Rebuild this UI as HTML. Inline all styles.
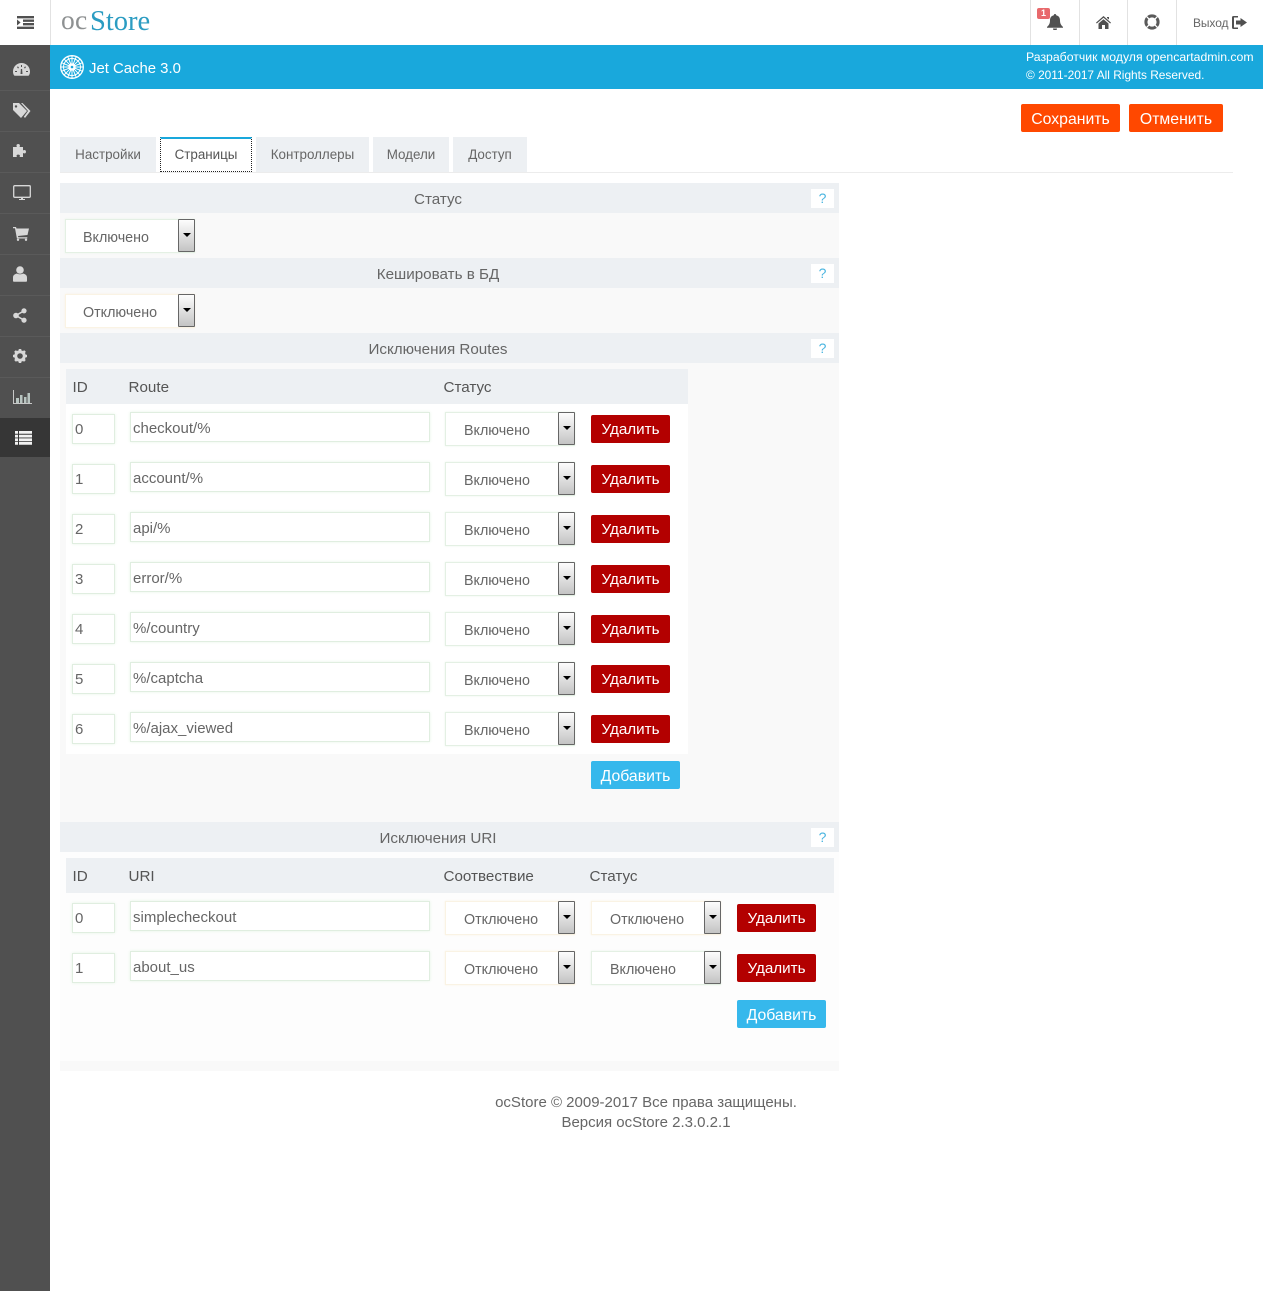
<!DOCTYPE html>
<html lang="ru"><head><meta charset="utf-8"><title>Jet Cache</title>
<style>
html,body{margin:0;padding:0;background:#fff}
body{position:relative;width:1263px;height:1306px;overflow:hidden;font-family:"Liberation Sans",Arial,sans-serif;color:#666;font-size:14px}
div,svg{position:absolute;box-sizing:border-box}
.t{white-space:nowrap}
.sep{top:0;width:1px;height:45px;background:#e2e2e2}
.sl{left:0;width:50px;height:1px;background:#5a5a5a}
.tab{top:137px;height:35px;background:#edf0f3;text-align:center;line-height:35px;font-size:13.4px;color:#666}
.h{left:60px;width:779px;height:30px;background:#edf0f3;text-align:center;line-height:33px;font-size:15.2px;padding-right:23px}
.q{left:811px;width:23px;height:19px;background:#fff;color:#4ab5e0;text-align:center;line-height:19px;font-size:14px}
.th{background:#edf0f3;height:35px}
.thc{line-height:37px;font-size:15.2px;color:#555;margin-left:-.5px}
.i{background:#fff;border:1px solid #e0eee0;box-shadow:0 0 3px #e6f4e6;font-size:15px;line-height:29px;padding-left:2px;color:#666}
.id{line-height:29px}
.u{line-height:31px}
.s{width:130px;height:34px;background:#fff;border:1px solid #e4f0e4;box-shadow:0 0 2px #e8f4e8;font-size:14.3px;line-height:36px;padding-left:18px;color:#666}
.off{border-color:#faf3e4;box-shadow:0 0 2px #fbf3e4}
.a{width:17px;height:33px;border:1px solid #666;background:linear-gradient(#fdfdfd,#c4c4c4);border-radius:1px}
.a:after{content:"";position:absolute;left:4px;top:13px;border:4px solid transparent;border-top:4px solid #000;border-bottom:0}
.r{width:79px;height:28px;background:#b30000;color:#fff;border-radius:2px;text-align:center;line-height:30px;font-size:15.2px}
.g{width:89px;height:28px;background:#36b8ec;color:#fff;border-radius:2px;text-align:center;line-height:31px;font-size:15.8px}
.o{top:104px;height:28px;background:#ff4800;color:#fff;border-radius:2px;text-align:center;line-height:32px;font-size:15.8px}
</style></head><body>

<!-- sidebar -->
<div style="left:0;top:45px;width:50px;height:1246px;background:#505050"></div>
<div class="sl" style="top:90px"></div><div class="sl" style="top:131px"></div><div class="sl" style="top:172px"></div><div class="sl" style="top:213px"></div><div class="sl" style="top:254px"></div><div class="sl" style="top:295px"></div><div class="sl" style="top:336px"></div><div class="sl" style="top:377px"></div>
<div style="left:0;top:418px;width:50px;height:39px;background:#363636"></div>

<svg style="left:13px;top:62px" width="17" height="15" viewBox="0 0 17 15"><path fill="#d8d8d8" fill-rule="evenodd" d="M8.5 1C4 1 0 4.500 0 9.500c0 1.500.4 2.800 1 3.800.2.300.5.500.9.500h13.200c.4 0 .7-.2.900-.5.600-1 1-2.300 1-3.800C17 4.500 13 1 8.500 1zM8 3h1v2H8zM4 5l1-.6 1 1.500-1 .6zM2 9h2v1H2zm11 0h2v1h-2zm-1-4.600 1 .6-1 1.500-1-.6zM7.500 12l.4-5h1.200l.4 5z"/></svg>
<svg style="left:13px;top:103px" width="18" height="16" viewBox="0 0 18 16"><path fill="#d8d8d8" d="M0 0h6l8 8-6 7-8-8zM3 2.200a1.200 1.200 0 1 0 .01 0z M8 0h1.500l8 8-5.500 7-1.200-1.200L15 8z"/></svg>
<svg style="left:13px;top:142px" width="16" height="16" viewBox="0 0 16 16"><path fill="#d8d8d8" d="M0 5h4c-.8-1-.8-3 1.200-3S7.200 4 6.500 5H10v3.500c1-.9 3-.8 3 1.200s-2 2-3 1.300V15H6.500c.7-1 .7-2.400-1.300-2.400S3.300 14 4 15H0z"/></svg>
<svg style="left:13px;top:185px" width="18" height="15" viewBox="0 0 18 15"><path fill="none" stroke="#d8d8d8" stroke-width="1.300" d="M1.700.7h14.600a1 1 0 0 1 1 1v9.600a1 1 0 0 1-1 1H1.700a1 1 0 0 1-1-1V1.700a1 1 0 0 1 1-1z"/><path fill="#d8d8d8" d="M8 12.500h2V14h2v1H6v-1h2z"/></svg>
<svg style="left:13px;top:227px" width="16" height="14" viewBox="0 0 16 14"><path fill="#d8d8d8" d="M0 0h3l.5 1.500H16l-1.500 6.500-9.500 1 .3 1.200h9v1.300H3.900L2 1.300H0z"/><circle fill="#d8d8d8" cx="5" cy="12.800" r="1.200"/><circle fill="#d8d8d8" cx="13" cy="12.800" r="1.200"/></svg>
<svg style="left:13px;top:266px" width="14" height="16" viewBox="0 0 14 16"><circle fill="#d8d8d8" cx="7" cy="4" r="3.800"/><path fill="#d8d8d8" d="M0 15v-3.500C0 9 2 8 4 7.500c1.800 1 4.200 1 6 0 2 .5 4 1.500 4 4V15a1 1 0 0 1-1 .8H1A1 1 0 0 1 0 15z"/></svg>
<svg style="left:13px;top:308px" width="14" height="15" viewBox="0 0 14 15"><path stroke="#d8d8d8" stroke-width="1.500" fill="none" d="M11 2.800 3 7.500l8 4.700"/><circle fill="#d8d8d8" cx="3" cy="7.500" r="2.800"/><circle fill="#d8d8d8" cx="11" cy="2.800" r="2.600"/><circle fill="#d8d8d8" cx="11" cy="12.200" r="2.600"/></svg>
<svg style="left:13px;top:349px" width="14" height="14" viewBox="0 0 14 14"><circle cx="7" cy="7" r="4.300" fill="none" stroke="#d8d8d8" stroke-width="3"/><path stroke="#d8d8d8" stroke-width="2.600" d="M7 0v14M0 7h14M2 2l10 10M12 2 2 12" stroke-dasharray="2.500 9 2.500"/></svg>
<svg style="left:13px;top:390px" width="19" height="15" viewBox="0 0 19 15"><path fill="#c8c8c8" d="M0 0h1v13h18v1H0z"/><path fill="#b8c4c0" d="M3 8h3v5H3zm4-3h2.500v8H7zm4 2h2.500v6H11zm3.500-4H17v10h-2.500z"/></svg>
<svg style="left:15px;top:431px" width="17" height="14" viewBox="0 0 17 14"><path fill="#f2f2f2" d="M0 0h3v2.800H0zm4 0h13v2.800H4zM0 3.700h3v2.800H0zm4 0h13v2.800H4zM0 7.400h3v2.800H0zm4 0h13v2.800H4zM0 11h3v2.800H0zm4 0h13v2.800H4z"/></svg>

<!-- header -->
<div style="left:50px;top:0;width:1px;height:45px;background:#e2e2e2"></div>
<svg style="left:17px;top:16px" width="17" height="13" viewBox="0 0 17 13"><path fill="#505050" d="M0 0h17v2.400H0zM6 3.500h11v2.400H6zM6 7h11v2.400H6zM0 10.600h17V13H0zM0 3.500l3.600 3-3.600 3z"/></svg>
<div class="t" style="left:61px;top:2px;font-family:'Liberation Serif',serif;font-size:27.500px;line-height:36px;color:#8e9192;letter-spacing:.2px">oc</div>
<div class="t" style="left:90px;top:3px;font-family:'Liberation Serif',serif;font-size:28.500px;line-height:38px;color:#2b9cc2">Store</div>
<div class="sep" style="left:1030px"></div><div class="sep" style="left:1079px"></div><div class="sep" style="left:1127px"></div><div class="sep" style="left:1176px"></div>
<svg style="left:1047px;top:14px" width="16" height="16" viewBox="0 0 16 16"><path fill="#505050" d="M8 0a1.200 1.200 0 0 1 1.200 1.300C12 2 13 4 13 6.500c0 3 1 4.500 3 6.500v.8H0V13c2-2 3-3.500 3-6.500C3 4 4 2 6.800 1.300A1.200 1.200 0 0 1 8 0zM6 14.500h4a2 2 0 0 1-4 0z"/></svg>
<div class="t" style="left:1037px;top:8px;width:13px;height:11px;background:#e8696c;border-radius:2px;color:#fff;font-size:9px;font-weight:bold;line-height:11px;text-align:center">1</div>
<svg style="left:1096px;top:16px" width="15" height="13" viewBox="0 0 15 13"><path fill="#505050" d="M7.500 0 15 6.600l-.8.900-6.700-5.800L.8 7.500 0 6.600zM11 1h2v2.500L11 2zM2.500 7.500l5-4.300 5 4.300V13h-3.500V9H6v4H2.500z"/></svg>
<svg style="left:1144px;top:14px" width="16" height="16" viewBox="0 0 16 16"><circle cx="8" cy="8" r="6.100" fill="none" stroke="#5a5a5a" stroke-width="3"/><path stroke="#fff" stroke-width="1.300" d="M2.600 2.600l2.800 2.800M13.400 2.600l-2.800 2.800M2.600 13.400l2.800-2.800M13.400 13.400l-2.800-2.800"/></svg>
<div class="t" style="left:1193px;top:14px;font-size:12px;line-height:18px;color:#666;letter-spacing:-.1px">Выход</div>
<svg style="left:1232px;top:16px" width="15" height="13" viewBox="0 0 15 13"><path fill="#505050" d="M1.500 0H6v1.500H2v10h4V13H1.500A1.500 1.500 0 0 1 0 11.500v-10A1.500 1.500 0 0 1 1.500 0zM8.500 2 15 6.500 8.500 11V8.500H4v-4h4.500z"/></svg>

<!-- blue bar -->
<div style="left:50px;top:45px;width:1213px;height:44px;background:#19a8dc"></div>
<svg style="left:60px;top:55px" width="24" height="24" viewBox="0 0 24 24" fill="none" stroke="#fff"><circle cx="12" cy="12" r="11.300" stroke-width="1.300"/><circle cx="12" cy="12" r="8.500" stroke-width="1"/><circle cx="12" cy="12" r="3" stroke-width="1.500"/><path stroke-width="1" d="M12 1v22M1 12h22M4.200 4.200l15.600 15.600M19.800 4.200 4.200 19.800M7.800 1.800l8.400 20.400M16.200 1.800 7.800 22.200M1.800 7.800l20.400 8.400M22.200 7.800 1.800 16.200"/><circle cx="12" cy="12" r="1.300" fill="#19a8dc" stroke="none"/></svg>
<div class="t" style="left:89px;top:59px;font-size:14.9px;line-height:20px;color:#fff">Jet Cache 3.0</div>
<div class="t" style="left:1026px;top:49px;font-size:12.250px;line-height:16px;color:#fff">Разработчик модуля opencartadmin.com</div>
<div class="t" style="left:1026px;top:67px;font-size:11.900px;line-height:16px;color:#fff">© 2011-2017 All Rights Reserved.</div>

<!-- action buttons -->
<div class="o" style="left:1021px;width:99px">Сохранить</div>
<div class="o" style="left:1129px;width:94px">Отменить</div>

<!-- tabs -->
<div style="left:60px;top:172px;width:1173px;height:1px;background:#ececec"></div>
<div class="tab" style="left:60px;width:96px">Настройки</div>
<div class="tab" style="left:160px;width:92px;background:#fff;border:1px dotted #222;border-top:2px solid #19a8dc;line-height:32px;color:#555">Страницы</div>
<div class="tab" style="left:256px;width:113px">Контроллеры</div>
<div class="tab" style="left:373px;width:76px">Модели</div>
<div class="tab" style="left:453px;width:74px">Доступ</div>

<!-- panel backgrounds -->
<div style="left:60px;top:183px;width:779px;height:639px;background:#f9f9f9"></div>
<div style="left:60px;top:852px;width:779px;height:209px;background:#fdfdfd"></div>
<div style="left:60px;top:1061px;width:779px;height:10px;background:#f9f9f9"></div>

<!-- Статус -->
<div class="h" style="top:183px">Статус</div><div class="q" style="top:189px">?</div>
<div class="s" style="left:65px;top:219px;padding-left:17px">Включено</div><div class="a" style="left:178px;top:219px"></div>

<!-- БД -->
<div class="h" style="top:258px">Кешировать в БД</div><div class="q" style="top:264px">?</div>
<div class="s off" style="left:65px;top:294px;padding-left:17px">Отключено</div><div class="a" style="left:178px;top:294px"></div>

<!-- Routes -->
<div class="h" style="top:333px">Исключения Routes</div><div class="q" style="top:339px">?</div>
<div style="left:66px;top:404px;width:622px;height:350px;background:#fff"></div>
<div class="th" style="left:66px;top:369px;width:622px"></div>
<div class="t thc" style="left:73px;top:369px">ID</div>
<div class="t thc" style="left:129px;top:369px">Route</div>
<div class="t thc" style="left:444px;top:369px">Статус</div>

<div class="i t id" style="left:72px;top:414px;width:43px;height:30px">0</div>
<div class="i t u" style="left:130px;top:412px;width:300px;height:30px">checkout/%</div>
<div class="s" style="left:445px;top:412px">Включено</div><div class="a" style="left:558px;top:412px"></div>
<div class="r" style="left:591px;top:415px">Удалить</div>

<div class="i t id" style="left:72px;top:464px;width:43px;height:30px">1</div>
<div class="i t u" style="left:130px;top:462px;width:300px;height:30px">account/%</div>
<div class="s" style="left:445px;top:462px">Включено</div><div class="a" style="left:558px;top:462px"></div>
<div class="r" style="left:591px;top:465px">Удалить</div>

<div class="i t id" style="left:72px;top:514px;width:43px;height:30px">2</div>
<div class="i t u" style="left:130px;top:512px;width:300px;height:30px">api/%</div>
<div class="s" style="left:445px;top:512px">Включено</div><div class="a" style="left:558px;top:512px"></div>
<div class="r" style="left:591px;top:515px">Удалить</div>

<div class="i t id" style="left:72px;top:564px;width:43px;height:30px">3</div>
<div class="i t u" style="left:130px;top:562px;width:300px;height:30px">error/%</div>
<div class="s" style="left:445px;top:562px">Включено</div><div class="a" style="left:558px;top:562px"></div>
<div class="r" style="left:591px;top:565px">Удалить</div>

<div class="i t id" style="left:72px;top:614px;width:43px;height:30px">4</div>
<div class="i t u" style="left:130px;top:612px;width:300px;height:30px">%/country</div>
<div class="s" style="left:445px;top:612px">Включено</div><div class="a" style="left:558px;top:612px"></div>
<div class="r" style="left:591px;top:615px">Удалить</div>

<div class="i t id" style="left:72px;top:664px;width:43px;height:30px">5</div>
<div class="i t u" style="left:130px;top:662px;width:300px;height:30px">%/captcha</div>
<div class="s" style="left:445px;top:662px">Включено</div><div class="a" style="left:558px;top:662px"></div>
<div class="r" style="left:591px;top:665px">Удалить</div>

<div class="i t id" style="left:72px;top:714px;width:43px;height:30px">6</div>
<div class="i t u" style="left:130px;top:712px;width:300px;height:30px">%/ajax_viewed</div>
<div class="s" style="left:445px;top:712px">Включено</div><div class="a" style="left:558px;top:712px"></div>
<div class="r" style="left:591px;top:715px">Удалить</div>

<div class="g" style="left:591px;top:761px">Добавить</div>

<!-- URI -->
<div class="h" style="top:822px">Исключения URI</div><div class="q" style="top:828px">?</div>
<div class="th" style="left:66px;top:858px;width:768px"></div>
<div class="t thc" style="left:73px;top:858px">ID</div>
<div class="t thc" style="left:129px;top:858px">URI</div>
<div class="t thc" style="left:444px;top:858px">Соотвествие</div>
<div class="t thc" style="left:590px;top:858px">Статус</div>

<div class="i t id" style="left:72px;top:903px;width:43px;height:30px">0</div>
<div class="i t u" style="left:130px;top:901px;width:300px;height:30px">simplecheckout</div>
<div class="s off" style="left:445px;top:901px">Отключено</div><div class="a" style="left:558px;top:901px"></div>
<div class="s off" style="left:591px;top:901px">Отключено</div><div class="a" style="left:704px;top:901px"></div>
<div class="r" style="left:737px;top:904px">Удалить</div>

<div class="i t id" style="left:72px;top:953px;width:43px;height:30px">1</div>
<div class="i t u" style="left:130px;top:951px;width:300px;height:30px">about_us</div>
<div class="s off" style="left:445px;top:951px">Отключено</div><div class="a" style="left:558px;top:951px"></div>
<div class="s" style="left:591px;top:951px">Включено</div><div class="a" style="left:704px;top:951px"></div>
<div class="r" style="left:737px;top:954px">Удалить</div>

<div class="g" style="left:737px;top:1000px">Добавить</div>

<!-- footer -->
<div class="t" style="left:446px;top:1093px;width:400px;text-align:center;font-size:15px;line-height:20px;color:#666">ocStore © 2009-2017 Все права защищены.</div>
<div class="t" style="left:446px;top:1113px;width:400px;text-align:center;font-size:15px;line-height:20px;color:#666">Версия ocStore 2.3.0.2.1</div>
</body></html>
